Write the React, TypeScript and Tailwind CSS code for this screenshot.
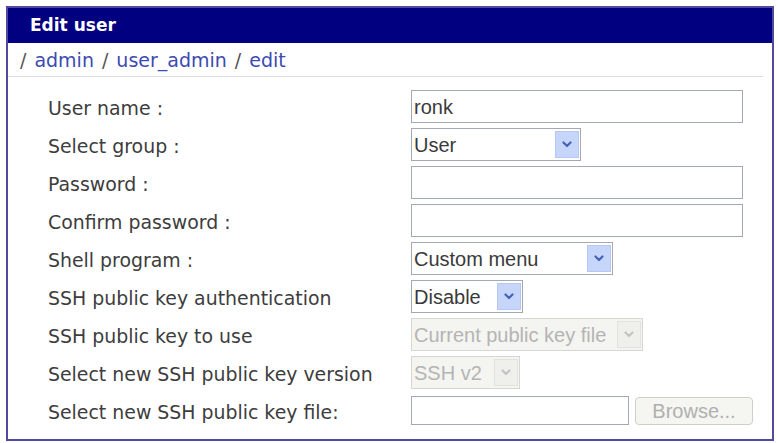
import type { ReactNode } from "react";

const labelCls =
  "font-['DejaVu_Sans',sans-serif] text-[18.9px] text-[#3d3d3d] leading-none";
const ctrlFont = "font-['Liberation_Sans',Arial,sans-serif] text-[20px] leading-none";

function Chevron({ color }: { color: string }) {
  return (
    <svg width="10" height="7" viewBox="0 0 10 7" fill="none">
      <path
        d="M1.5 1.5 L5 5 L8.5 1.5"
        stroke={color}
        strokeWidth="2.2"
        strokeLinecap="round"
        strokeLinejoin="round"
      />
    </svg>
  );
}

function TextBox({ value = "", width = "w-[332px]" }: { value?: string; width?: string }) {
  return (
    <div
      className={`${width} h-[33px] border border-[#a3a9b3] bg-white flex items-center pl-[2px] text-[#3a3a3a] ${ctrlFont}`}
    >
      {value}
    </div>
  );
}

function Select({
  value,
  width,
  disabled = false,
}: {
  value: string;
  width: string;
  disabled?: boolean;
}) {
  return (
    <div
      className={`${width} h-[33px] border flex items-stretch ${
        disabled
          ? "border-[#d6d6d2] bg-[#f4f4f1] text-[#b4b4b4]"
          : "border-[#a3a9b3] bg-white text-[#3a3a3a]"
      } ${ctrlFont}`}
    >
      <div className="flex-1 flex items-center pl-[2px] whitespace-nowrap overflow-hidden">
        {value}
      </div>
      <div
        className={`w-[24px] my-[2px] mr-[1px] flex items-center justify-center ${
          disabled
            ? "bg-[#efefec] border border-[#e2e2de]"
            : "bg-[#c6d5fa] border border-[#b6c7f3]"
        }`}
      >
        <Chevron color={disabled ? "#c4c4c4" : "#4563b8"} />
      </div>
    </div>
  );
}

function Row({ label, children }: { label: string; children: ReactNode }) {
  return (
    <>
      <div className={`h-[33px] pt-[4px] flex items-center ${labelCls}`}>{label}</div>
      <div className="h-[33px] flex items-center">{children}</div>
    </>
  );
}

export default function App() {
  return (
    <div className="min-h-screen bg-white pl-[6px] pt-[6px]">
      <div className="w-[768px] h-[435px] border-2 border-[#4f4a9c] bg-white flex flex-col">
        <div className="h-[35px] shrink-0 bg-[#000080] pl-[22px] flex items-center text-white font-bold font-['DejaVu_Sans',sans-serif] text-[17px]">
          Edit user
        </div>

        <div className="h-[34px] shrink-0 mr-[9px] border-b border-[#dcdce6] pl-[12px] pt-[2px] flex items-center gap-[8px] font-['DejaVu_Sans',sans-serif] text-[19px] leading-none">
          <span className="text-[#555]">/</span>
          <span className="text-[#3b4bb0]">admin</span>
          <span className="text-[#555]">/</span>
          <span className="text-[#3b4bb0]">user_admin</span>
          <span className="text-[#555]">/</span>
          <span className="text-[#3b4bb0]">edit</span>
        </div>

        <div className="mt-[13px] pl-[40px] grid grid-cols-[363px_1fr] gap-y-[5px]">
          <Row label="User name :">
            <TextBox value="ronk" />
          </Row>
          <Row label="Select group :">
            <Select value="User" width="w-[170px]" />
          </Row>
          <Row label="Password :">
            <TextBox />
          </Row>
          <Row label="Confirm password :">
            <TextBox />
          </Row>
          <Row label="Shell program :">
            <Select value="Custom menu" width="w-[202px]" />
          </Row>
          <Row label="SSH public key authentication">
            <Select value="Disable" width="w-[112px]" />
          </Row>
          <Row label="SSH public key to use">
            <Select value="Current public key file" width="w-[232px]" disabled />
          </Row>
          <Row label="Select new SSH public key version">
            <Select value="SSH v2" width="w-[109px]" disabled />
          </Row>
          <Row label="Select new SSH public key file:">
            <div className="flex items-center gap-[6px]">
              <div className="w-[218px] h-[29px] border border-[#a3a9b3] bg-white" />
              <button
                type="button"
                disabled
                className={`w-[118px] h-[28px] rounded-[4px] border border-[#cfcfca] bg-[#f5f5f1] text-[#b0b0b0] ${ctrlFont}`}
              >
                Browse...
              </button>
            </div>
          </Row>
        </div>
      </div>
    </div>
  );
}
